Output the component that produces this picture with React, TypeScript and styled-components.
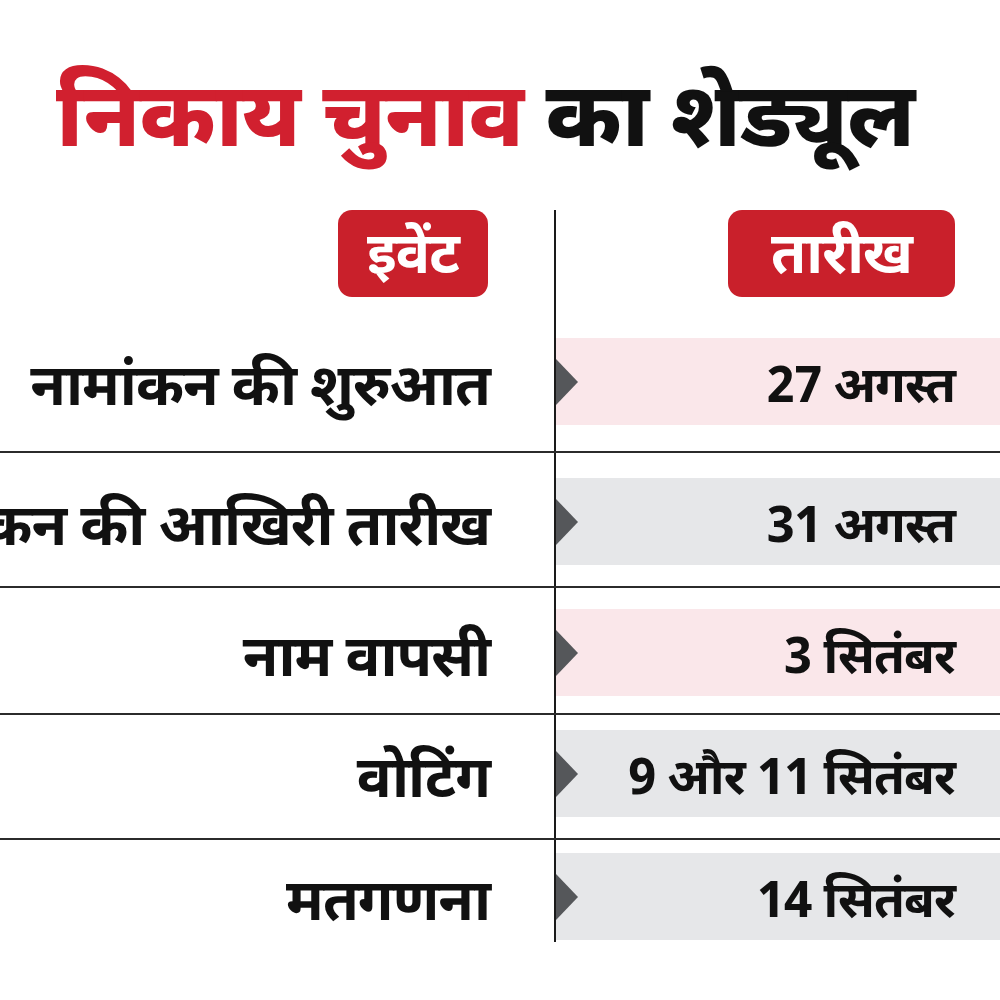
import React from "react";
import styled, { createGlobalStyle } from "styled-components";

const GlobalStyle = createGlobalStyle`
  html, body {
    margin: 0;
    padding: 0;
    background: #ffffff;
  }
  body {
    font-family: "Noto Sans Devanagari", "Lohit Devanagari", "Noto Sans", "Liberation Sans", sans-serif;
  }
`;

const Page = styled.div`
  width: 1000px;
  height: 1000px;
  overflow: hidden;
  background: #ffffff;
`;

const Title = styled.h1`
  margin: 0;
  height: 210px;
  padding: 70px 0 0 56px;
  box-sizing: border-box;
  font-size: 90px;
  font-weight: 800;
  line-height: 1.2;
  white-space: nowrap;
  color: #111111;
  letter-spacing: -1px;
`;

const Red = styled.span`
  color: #d1202f;
`;

const Table = styled.div`
  display: grid;
  grid-template-columns: 554px 446px;
`;

const HeadCell = styled.div<{ $side: "left" | "right" }>`
  height: 88px;
  display: flex;
  justify-content: flex-end;
  padding-right: ${(p) => (p.$side === "left" ? 66 : 45)}px;
  border-left: ${(p) => (p.$side === "right" ? "2px solid #1a1a1a" : "none")};
`;

const Pill = styled.div<{ $w: number }>`
  width: ${(p) => p.$w}px;
  height: 87px;
  box-sizing: border-box;
  padding-top: 10px;
  border-radius: 14px;
  background: #c9202b;
  color: #ffffff;
  font-size: 57px;
  font-weight: 700;
  display: flex;
  align-items: center;
  justify-content: center;
  letter-spacing: -1px;
`;

const Row = styled.div<{ $h: number; $last?: boolean }>`
  grid-column: 1 / span 2;
  display: grid;
  grid-template-columns: 554px 446px;
  height: ${(p) => p.$h}px;
  border-bottom: ${(p) => (p.$last ? "none" : "2px solid #2b2b2b")};
`;

const EventCell = styled.div<{ $top: number }>`
  padding-top: ${(p) => p.$top}px;
  padding-right: 64px;
  min-width: 0;
`;

const EventText = styled.div`
  height: 87px;
  box-sizing: border-box;
  padding-top: 18px;
  display: flex;
  align-items: center;
  justify-content: flex-end;
  font-size: 58px;
  font-weight: 700;
  letter-spacing: -1px;
  color: #111111;
  white-space: nowrap;
`;

const DateCell = styled.div<{ $top: number }>`
  border-left: 2px solid #1a1a1a;
  padding-top: ${(p) => p.$top}px;
  box-sizing: border-box;
`;

const Band = styled.div<{ $tone: "pink" | "gray" }>`
  position: relative;
  height: 87px;
  box-sizing: border-box;
  padding: 15px 45px 0 0;
  background: ${(p) => (p.$tone === "pink" ? "#fae7ea" : "#e6e7e9")};
  display: flex;
  align-items: center;
  justify-content: flex-end;
  font-size: 50px;
  font-weight: 700;
  letter-spacing: -1px;
  color: #111111;
  white-space: nowrap;
`;

const Arrow = styled.div`
  position: absolute;
  left: 0;
  top: 50%;
  transform: translateY(-50%);
  width: 0;
  height: 0;
  border-top: 23px solid transparent;
  border-bottom: 23px solid transparent;
  border-left: 22px solid #55575a;
`;

const LastCell = styled(DateCell)`
  height: 102px;
`;

type Item = { event: string; date: string; tone: "pink" | "gray"; h: number; top: number };

const items: Item[] = [
  { event: "नामांकन की शुरुआत", date: "27 अगस्त", tone: "pink", h: 153, top: 40 },
  { event: "नामांकन की आखिरी तारीख", date: "31 अगस्त", tone: "gray", h: 133, top: 25 },
  { event: "नाम वापसी", date: "3 सितंबर", tone: "pink", h: 125, top: 21 },
  { event: "वोटिंग", date: "9 और 11 सितंबर", tone: "gray", h: 123, top: 15 },
  { event: "मतगणना", date: "14 सितंबर", tone: "gray", h: 102, top: 13 },
];

export default function App() {
  return (
    <Page>
      <GlobalStyle />
      <Title>
        <Red>निकाय चुनाव</Red> का शेड्यूल
      </Title>
      <Table>
        <HeadCell $side="left">
          <Pill $w={150}>इवेंट</Pill>
        </HeadCell>
        <HeadCell $side="right">
          <Pill $w={227}>तारीख</Pill>
        </HeadCell>
        {items.map((it, i) => {
          const last = i === items.length - 1;
          const Cell = last ? LastCell : DateCell;
          return (
            <Row key={it.date} $h={it.h} $last={last}>
              <EventCell $top={it.top}>
                <EventText>{it.event}</EventText>
              </EventCell>
              <Cell $top={it.top}>
                <Band $tone={it.tone}>
                  <Arrow />
                  {it.date}
                </Band>
              </Cell>
            </Row>
          );
        })}
      </Table>
    </Page>
  );
}
